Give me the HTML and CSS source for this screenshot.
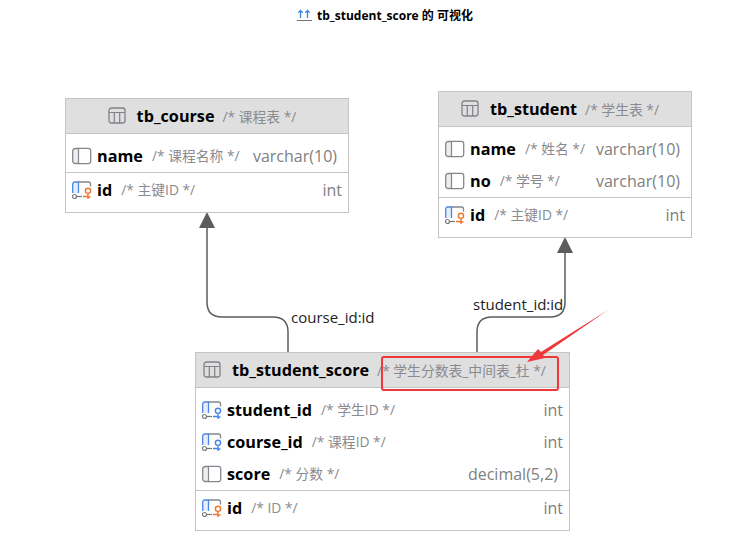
FILE: index.html
```html
<!DOCTYPE html>
<html lang="zh">
<head>
<meta charset="utf-8">
<title>tb_student_score 的 可视化</title>
<link rel="stylesheet" href="styles.css">
</head>
<body>
<svg width="0" height="0" class="defs">
  <symbol id="i-table" viewBox="0 0 18 17">
    <rect x="1" y="1" width="16" height="15" rx="2.5" fill="none" stroke="#7f8288" stroke-width="1.3"/>
    <path d="M1 5.5H17M6.3 5.5V16M11.7 5.5V16" fill="none" stroke="#7f8288" stroke-width="1.2"/>
  </symbol>
  <symbol id="i-col" viewBox="0 0 21 20">
    <rect x="0.700" y="2.500" width="18" height="15" rx="2.500" fill="#eeeef0" stroke="#85878d" stroke-width="1.300"/>
    <path d="M7 3H16A2 2 0 0 1 18 5V15A2 2 0 0 1 16 17H7Z" fill="#fff"/>
    <path d="M6.500 2.500V17.500" stroke="#85878d" stroke-width="1.200"/>
  </symbol>
  <symbol id="i-pk" viewBox="0 -1 21 20">
    <path d="M0.700 12V3A2 2 0 0 1 2.700 1H6.500V12" fill="#e6eefb" stroke="#4a86e8" stroke-width="1.300"/>
    <path d="M6.500 1H16.500A2 2 0 0 1 18.500 3V5.500" fill="none" stroke="#85878d" stroke-width="1.300"/>
    <circle cx="2.500" cy="15.500" r="2" fill="none" stroke="#75777d" stroke-width="1.200"/>
    <path d="M5 15.500H10" stroke="#75777d" stroke-width="1.200"/>
    <circle cx="16" cy="9.800" r="2.600" fill="none" stroke="#e9772e" stroke-width="1.400"/>
    <path d="M16 12.500V18M16 16H18.500M11 15.500H16" fill="none" stroke="#e9772e" stroke-width="1.400"/>
  </symbol>
  <symbol id="i-fk" viewBox="0 -1 21 20">
    <path d="M0.700 12V3A2 2 0 0 1 2.700 1H6.500V12" fill="#e6eefb" stroke="#4a86e8" stroke-width="1.300"/>
    <path d="M6.500 1H16.500A2 2 0 0 1 18.500 3V5.500" fill="none" stroke="#85878d" stroke-width="1.300"/>
    <circle cx="2.500" cy="15.500" r="2" fill="none" stroke="#75777d" stroke-width="1.200"/>
    <path d="M5 15.500H10" stroke="#75777d" stroke-width="1.200"/>
    <circle cx="16" cy="9.800" r="2.600" fill="none" stroke="#3f86e6" stroke-width="1.400"/>
    <path d="M16 12.500V18M16 16H18.500M11 15.500H16" fill="none" stroke="#3f86e6" stroke-width="1.400"/>
  </symbol>
</svg>

<header class="title">
  <svg class="title-icon" viewBox="0 0 15 13" width="15" height="13">
    <path d="M3.500 10V2.500M1.300 4.700L3.500 2.500L5.700 4.700M10.500 10V2.500M8.300 4.700L10.500 2.500L12.700 4.700" fill="none" stroke="#3f86e6" stroke-width="1.300"/>
    <path d="M0 12.500H15" stroke="#6f7278" stroke-width="1"/>
  </svg>
  <span>tb_student_score 的 可视化</span>
</header>

<main class="canvas">
  <svg class="links" width="755" height="556" viewBox="0 0 755 556">
    <path class="link" d="M288 352V332Q288 317 273 317H222Q207 317 207 302V226"/>
    <polygon class="head" points="207,212 199,228 215,228"/>
    <path class="link" d="M477 352V332Q477 317 492 317H550Q565 317 565 302V251"/>
    <polygon class="head" points="565,237 557,253 573,253"/>
  </svg>

  <span class="edge-label label-course">course_id:id</span>
  <span class="edge-label label-student">student_id:id</span>

  <section class="node node-course">
    <div class="node-head">
      <svg class="head-icon"><use href="#i-table"/></svg>
      <b class="node-name">tb_course</b><span class="note">/* 课程表 */</span>
    </div>
    <div class="rows rows-cols">
      <div class="row"><svg class="col-icon"><use href="#i-col"/></svg><b>name</b><span class="note">/* 课程名称 */</span><span class="type type-wide">varchar(10)</span></div>
    </div>
    <div class="rows rows-keys">
      <div class="row"><svg class="col-icon"><use href="#i-pk"/></svg><b>id</b><span class="note">/* 主键ID */</span><span class="type">int</span></div>
    </div>
  </section>

  <section class="node node-student">
    <div class="node-head">
      <svg class="head-icon"><use href="#i-table"/></svg>
      <b class="node-name">tb_student</b><span class="note">/* 学生表 */</span>
    </div>
    <div class="rows rows-cols">
      <div class="row"><svg class="col-icon"><use href="#i-col"/></svg><b>name</b><span class="note">/* 姓名 */</span><span class="type type-wide">varchar(10)</span></div>
      <div class="row"><svg class="col-icon"><use href="#i-col"/></svg><b>no</b><span class="note">/* 学号 */</span><span class="type type-wide">varchar(10)</span></div>
    </div>
    <div class="rows rows-keys">
      <div class="row"><svg class="col-icon"><use href="#i-pk"/></svg><b>id</b><span class="note">/* 主键ID */</span><span class="type">int</span></div>
    </div>
  </section>

  <section class="node node-score">
    <div class="node-head node-head-start">
      <svg class="head-icon"><use href="#i-table"/></svg>
      <b class="node-name">tb_student_score</b><span class="note">/* 学生分数表_中间表_杜 */</span>
    </div>
    <div class="rows rows-cols">
      <div class="row"><svg class="col-icon"><use href="#i-fk"/></svg><b>student_id</b><span class="note">/* 学生ID */</span><span class="type">int</span></div>
      <div class="row"><svg class="col-icon"><use href="#i-fk"/></svg><b>course_id</b><span class="note">/* 课程ID */</span><span class="type">int</span></div>
      <div class="row"><svg class="col-icon"><use href="#i-col"/></svg><b>score</b><span class="note">/* 分数 */</span><span class="type type-wide">decimal(5,2)</span></div>
    </div>
    <div class="rows rows-keys">
      <div class="row"><svg class="col-icon"><use href="#i-pk"/></svg><b>id</b><span class="note">/* ID */</span><span class="type">int</span></div>
    </div>
  </section>

  <div class="mark-box"></div>
  <svg class="mark-arrow" width="755" height="556" viewBox="0 0 755 556">
    <polygon class="mark-fill" points="608,310 541,352 538,349 527,362 545,358 543,355"/>
  </svg>
</main>
</body>
</html>
```

FILE: styles.css
```css
* { box-sizing: border-box; }

html, body {
  margin: 0;
  padding: 0;
  background: #fff;
}

body {
  width: 755px;
  height: 556px;
  overflow: hidden;
  font-family: "Open Sans", "Noto Sans CJK SC", sans-serif;
  color: #000;
}

.defs { position: absolute; }

.title {
  display: flex;
  align-items: center;
  justify-content: center;
  gap: 5px;
  height: 29px;
  margin-bottom: 1px;
  padding-left: 15px;
  font-size: 12px;
  font-weight: 700;
}

.canvas {
  position: relative;
  width: 755px;
  height: 526px;
}

.links, .mark-arrow {
  position: absolute;
  left: 0;
  top: -30px;
  pointer-events: none;
}

.link {
  fill: none;
  stroke: #5c5c5c;
  stroke-width: 1.500;
}

.head { fill: #5c5c5c; }
.mark-fill { fill: #f0373a; }

.edge-label {
  position: absolute;
  font-size: 15px;
  line-height: 20px;
  color: #222;
}

.label-course { left: 291px; top: 277px; }
.label-student { left: 473px; top: 264px; }

.node {
  position: absolute;
  background: #fff;
  border: 1px solid #c4c4c4;
}

.node-course { left: 65px; top: 68px; width: 284px; }
.node-student { left: 438px; top: 61px; width: 254px; }
.node-score { left: 195px; top: 322px; width: 375px; }

.node-head {
  display: flex;
  align-items: center;
  justify-content: center;
  height: 35px;
  padding: 0 10px 1px 0;
  background: #dfdfdf;
  border-bottom: 1px solid #c4c4c4;
}

.node-head-start {
  justify-content: flex-start;
  padding-left: 7px;
}

.head-icon {
  width: 18px;
  height: 17px;
  margin-right: 11px;
  flex: none;
}

.node-name {
  font-size: 16.200px;
  margin-right: 8px;
}

.rows-cols {
  padding-top: 6px;
  border-bottom: 1px solid #c4c4c4;
}

.rows-keys { padding: 1px 0 6px; }

.row {
  display: flex;
  align-items: center;
  height: 32px;
  padding: 0 6px;
  font-size: 16.200px;
  line-height: 30px;
  white-space: nowrap;
}

.row b { padding-bottom: 1px; }

.col-icon {
  width: 21px;
  height: 20px;
  margin-right: 4px;
  flex: none;
}

.note {
  margin-left: 9px;
  font-size: 13.800px;
  color: #8a8a90;
}

.node-name + .note { margin-left: 0; }

.type {
  margin-left: auto;
  font-size: 16px;
  color: #808080;
}

.type-wide { margin-right: 5px; }

.mark-box {
  position: absolute;
  left: 381px;
  top: 326px;
  width: 178px;
  height: 35px;
  border: 2px solid #f0373a;
  border-radius: 3px;
}
```
